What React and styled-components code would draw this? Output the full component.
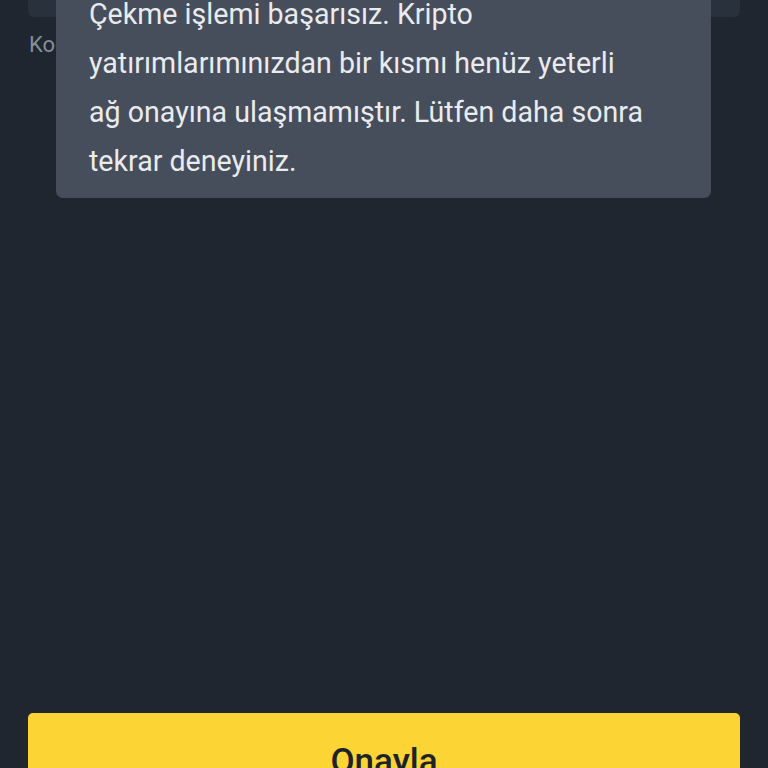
import styled, { createGlobalStyle } from 'styled-components';

const GlobalStyle = createGlobalStyle`
  html, body {
    margin: 0;
    padding: 0;
    background: #1f2630;
    overflow: hidden;
  }
`;

export default function App() {
  return (
    <Screen>
      <GlobalStyle />
      <InputBox />
      <FieldLabel>Kod doğrulama</FieldLabel>
      <Spacer />
      <ConfirmButton>Onayla</ConfirmButton>
      <Toast>
        Çekme işlemi başarısız. Kripto
        <br />
        yatırımlarımınızdan bir kısmı henüz yeterli
        <br />
        ağ onayına ulaşmamıştır. Lütfen daha sonra
        <br />
        tekrar deneyiniz.
      </Toast>
    </Screen>
  );
}

const Screen = styled.div`
  position: relative;
  height: 768px;
  display: flex;
  flex-direction: column;
  padding: 0 28px;
  font-family: Roboto, 'Noto Sans', sans-serif;
  overflow: hidden;
`;

const InputBox = styled.div`
  height: 60px;
  margin-top: -43px;
  border-radius: 6px;
  background: #29313c;
  flex-shrink: 0;
`;

const FieldLabel = styled.p`
  margin: 13px 0 0 1px;
  font-size: 22px;
  line-height: 30px;
  color: #848e9c;
`;

const Spacer = styled.div`
  flex: 1;
`;

const ConfirmButton = styled.button`
  height: 96px;
  margin-bottom: -41px;
  flex-shrink: 0;
  border: none;
  border-radius: 5px;
  background: #fcd535;
  color: #1e2329;
  font-family: Roboto, sans-serif;
  font-size: 35px;
  font-weight: 500;
`;

const Toast = styled.div`
  position: absolute;
  left: 56px;
  top: -22px;
  width: 655px;
  box-sizing: border-box;
  padding: 12px 20px 12px 33px;
  border-radius: 7px;
  background: #474e5b;
  color: #e9ebef;
  font-size: 28.6px;
  line-height: 49px;
  white-space: nowrap;
`;
